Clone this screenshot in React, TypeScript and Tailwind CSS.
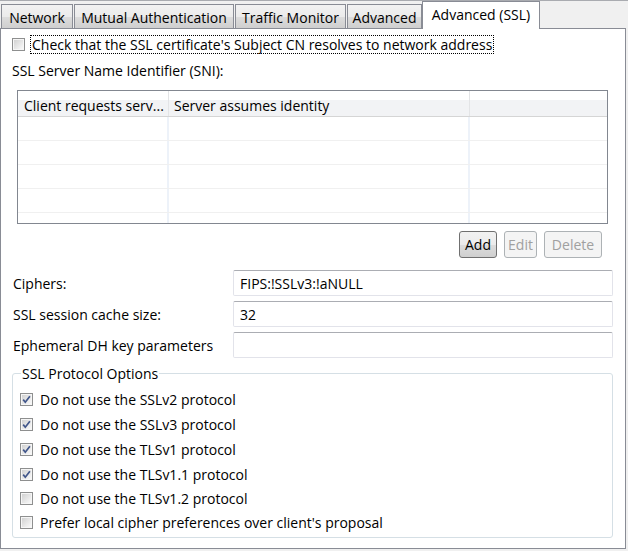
import type { ReactNode } from 'react';

const tabs = [
    { label: 'Network', w: 'w-[72px]' },
    { label: 'Mutual Authentication', w: 'w-[160px]' },
    { label: 'Traffic Monitor', w: 'w-[111px]' },
    { label: 'Advanced', w: 'w-[75px]' },
];

const protocols = [
    { label: 'Do not use the SSLv2 protocol', checked: true, h: 'h-[25px]' },
    { label: 'Do not use the SSLv3 protocol', checked: true, h: 'h-[25px]' },
    { label: 'Do not use the TLSv1 protocol', checked: true, h: 'h-[25px]' },
    { label: 'Do not use the TLSv1.1 protocol', checked: true, h: 'h-[25px]' },
    { label: 'Do not use the TLSv1.2 protocol', checked: false, h: 'h-[23px]' },
    { label: "Prefer local cipher preferences over client's proposal", checked: false, h: 'h-[25px]' },
];

const fields = [
    { label: 'Ciphers:', value: 'FIPS:!SSLv3:!aNULL' },
    { label: 'SSL session cache size:', value: '32' },
    { label: 'Ephemeral DH key parameters', value: '' },
];

// win7 style checkbox
const Check = ({ checked }: { checked: boolean }) => (
    <svg width="13" height="13" viewBox="0 0 13 13" className="shrink-0">
        <defs>
            <linearGradient id="cbg" x1="0" y1="0" x2="1" y2="1">
                <stop offset="0" stopColor="#d2d2d2" />
                <stop offset="1" stopColor="#f9f9f9" />
            </linearGradient>
        </defs>
        <rect x="0.5" y="0.5" width="12" height="12" fill="#f6f6f6" stroke="#8e8f8f" />
        <rect x="2" y="2" width="9" height="9" fill="url(#cbg)" />
        {checked && (
            <path d="M3.2 6.6 L5.3 9.2 L9.9 3.2" fill="none" stroke="#41568a" strokeWidth="1.7" />
        )}
    </svg>
);

const Btn = ({ children, on, w }: { children: ReactNode; on?: boolean; w: string }) => (
    <div
        className={`${w} h-[27px] flex items-center justify-center rounded-[3px] border ${
            on
                ? 'border-[#707070] bg-[linear-gradient(#f2f2f2,#ebebeb_50%,#dddddd_51%,#cfcfcf)] text-black'
                : 'border-[#adb2b5] bg-[#f4f4f4] text-[#a0a0a0]'
        }`}
    >
        {children}
    </div>
);

export default function App() {
    return (
        <div
            className="w-[628px] h-[551px] bg-[#f0f0f0] border-t border-[#a9abb0] text-[14px] leading-[19px] text-black overflow-hidden"
            style={{ fontFamily: '"Segoe UI", "Open Sans", "Noto Sans", sans-serif' }}
        >
            {/* tab strip */}
            <div className="flex items-end h-[27px] pl-[1px]">
                {tabs.map((t) => (
                    <div
                        key={t.label}
                        className={`${t.w} h-[24px] mr-[1px] flex items-center justify-center pt-[1px] whitespace-nowrap border border-b-0 border-[#898c95] bg-[linear-gradient(#f2f2f2,#ebebeb_50%,#dddddd_51%,#cfcfcf)]`}
                    >
                        {t.label}
                    </div>
                ))}
                <div className="relative z-10 w-[118px] h-[28px] -mb-px -ml-[1px] flex items-start justify-center pt-[3px] whitespace-nowrap border border-b-0 border-[#898c95] bg-white">
                    Advanced (SSL)
                </div>
            </div>

            {/* page */}
            <div className="w-[626px] h-[521px] border border-[#898c95] bg-white pl-[11px] pr-[12px] pt-[6px] flex flex-col">
                <div className="flex items-center h-[19px]">
                    <Check checked={false} />
                    <span className="ml-[5px] h-[19px] px-[1px] flex items-center whitespace-nowrap border border-dotted border-black">
                        Check that the SSL certificate's Subject CN resolves to network address
                    </span>
                </div>

                <div className="mt-[7px] h-[19px]">SSL Server Name Identifier (SNI):</div>

                {/* SNI table */}
                <div className="mt-[10px] mx-[5px] h-[134px] border border-[#828790] flex flex-col overflow-hidden">
                    <div className="flex h-[26px] shrink-0 border-b border-[#d5d5d5] bg-[linear-gradient(#ffffff,#ffffff_36%,#f2f3f5_36%,#f2f3f5)]">
                        <div className="w-[151px] border-r border-[#e3e4e6] pl-[6px] pt-[5px] whitespace-nowrap overflow-hidden">
                            Client requests serv...
                        </div>
                        <div className="w-[301px] border-r border-[#e3e4e6] pl-[5px] pt-[5px] whitespace-nowrap">
                            Server assumes identity
                        </div>
                        <div className="flex-1" />
                    </div>
                    {[0, 1, 2, 3, 4].map((r) => (
                        <div key={r} className="flex h-[24px] shrink-0 border-b border-[#f0f0f0]">
                            <div className="w-[151px] border-r-2 border-[#edf2f9]" />
                            <div className="w-[301px] border-r-2 border-[#edf2f9]" />
                            <div className="flex-1" />
                        </div>
                    ))}
                </div>

                <div className="mt-[7px] flex justify-end gap-[7px] pr-[11px]">
                    <Btn on w="w-[38px]">Add</Btn>
                    <Btn w="w-[33px]">Edit</Btn>
                    <Btn w="w-[58px]">Delete</Btn>
                </div>

                <div className="mt-[12px] flex flex-col gap-[5px]">
                    {fields.map((f) => (
                        <div key={f.label} className="flex items-center h-[26px]">
                            <div className="w-[221px] pl-[1px] whitespace-nowrap">{f.label}</div>
                            <div className="flex-1 h-full flex items-center pl-[6px] rounded-[2px] border border-[#e2e3ea] border-t-[#abadb3]">
                                {f.value}
                            </div>
                        </div>
                    ))}
                </div>

                <fieldset className="mt-[6px] border border-[#d5dfe5] rounded-[3px] pl-[7px] pb-[2px]">
                    <legend className="ml-[1px] px-[1px] h-[19px]">SSL Protocol Options</legend>
                    <div className="pt-[4px] flex flex-col">
                        {protocols.map((p) => (
                            <div key={p.label} className={`${p.h} flex items-center gap-[7px] whitespace-nowrap`}>
                                <Check checked={p.checked} />
                                <span>{p.label}</span>
                            </div>
                        ))}
                    </div>
                </fieldset>
            </div>
        </div>
    );
}
